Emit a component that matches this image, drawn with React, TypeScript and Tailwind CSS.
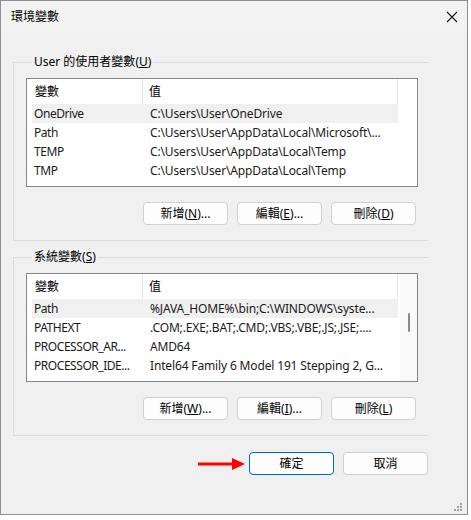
import React from "react";

const font = "font-['Noto_Sans','Noto_Sans_CJK_TC',sans-serif]";

type Row = { name: string, value: string, selected?: boolean };

const userRows: Row[] = [
    {name: "OneDrive", value: "C:\\Users\\User\\OneDrive", selected: true},
    {name: "Path", value: "C:\\Users\\User\\AppData\\Local\\Microsoft\\..."},
    {name: "TEMP", value: "C:\\Users\\User\\AppData\\Local\\Temp"},
    {name: "TMP", value: "C:\\Users\\User\\AppData\\Local\\Temp"},
];

const systemRows: Row[] = [
    {name: "Path", value: "%JAVA_HOME%\\bin;C:\\WINDOWS\\syste...", selected: true},
    {name: "PATHEXT", value: ".COM;.EXE;.BAT;.CMD;.VBS;.VBE;.JS;.JSE;...."},
    {name: "PROCESSOR_AR...", value: "AMD64"},
    {name: "PROCESSOR_IDE...", value: "Intel64 Family 6 Model 191 Stepping 2, G..."},
];

const Btn = (props: { label: string, keyChar?: string, tail?: string, primary?: boolean }) => {
    return (
        <button
            className={`w-[85px] h-[23px] rounded-[4px] bg-[#fdfdfd] text-[12px] leading-none text-black flex items-center justify-center border ${props.primary ? "border-[#0067c0]" : "border-[#d0d0d0]"}`}>
            {props.label}
            {props.keyChar && <>(<u>{props.keyChar}</u>){props.tail}</>}
        </button>
    );
};

const VarList = (props: { rows: Row[], scroll?: boolean }) => {
    return (
        <div className="w-[392px] h-[109px] border border-[#828790] bg-white flex">
            <div className="w-[371px] pl-[5px] flex flex-col">
                <div className="h-[25px] flex items-center text-[12px] text-black">
                    <div className="w-[111px] pl-[3px] border-r border-[#e5e5e5] h-full flex items-center">變數</div>
                    <div className="flex-1 pl-[6px] border-r border-[#e5e5e5] h-full flex items-center">值</div>
                </div>
                {props.rows.map((r) => (
                    <div key={r.name}
                         className={`h-[19px] flex items-center text-[12px] tracking-[-0.15px] text-[#1a1a1a] whitespace-nowrap ${r.selected ? "bg-[#f0f0f0]" : ""}`}>
                        <div className="w-[112px] shrink-0 pl-[2px] tracking-[-0.45px]">{r.name}</div>
                        <div className="flex-1 min-w-0 pl-[6px] overflow-hidden">{r.value}</div>
                    </div>
                ))}
            </div>
            {props.scroll &&
                <div className="ml-[2px] w-[17px] h-full bg-[#f9f9f9] flex justify-center">
                    <div className="mt-[39px] w-[2px] h-[19px] bg-[#8a8a8a] rounded-full"/>
                </div>
            }
        </div>
    );
};

const Group = (props: { title: string, keyChar: string, rows: Row[], scroll?: boolean, btns: string[] }) => {
    return (
        <fieldset className="w-[415px] border-t border-l border-b border-[#dcdcdc] pl-[12px] pb-[15px]">
            <legend className="ml-[6px] px-[2px] text-[12px] leading-[16px] text-black">
                {props.title}(<u>{props.keyChar}</u>)
            </legend>
            <div className="mt-[8px]">
                <VarList rows={props.rows} scroll={props.scroll}/>
            </div>
            <div className="mt-[15px] w-[390px] flex justify-end gap-[9px]">
                <Btn label="新增" keyChar={props.btns[0]} tail="..."/>
                <Btn label="編輯" keyChar={props.btns[1]} tail="..."/>
                <Btn label="刪除" keyChar={props.btns[2]}/>
            </div>
        </fieldset>
    );
};

export default function App() {
    return (
        <div className={`${font} w-[471px] h-[520px] bg-white`}>
            <div className="relative w-[468px] h-[515px] border border-[#8f8f8f] bg-[#f0f0f0] flex flex-col">
                <div className="h-[31px] bg-[#f3f3f3] flex items-center justify-between pl-[10px] pr-[9px]">
                    <span className="text-[12px] text-black">環境變數</span>
                    <svg width="12" height="12" viewBox="0 0 12 12">
                        <path d="M1 1 L11 11 M11 1 L1 11" stroke="#1a1a1a" strokeWidth="1.1"/>
                    </svg>
                </div>
                <div className="pl-[12px] pt-[22px] flex flex-col">
                    <Group title="User 的使用者變數" keyChar="U" rows={userRows} btns={["N", "E", "D"]}/>
                    <div className="mt-[8px]">
                        <Group title="系統變數" keyChar="S" rows={systemRows} scroll btns={["W", "I", "L"]}/>
                    </div>
                    <div className="mt-[16px] w-[415px] flex justify-end items-center gap-[9px]">
                        <svg width="48" height="14" viewBox="0 0 48 14" className="mr-[-6px]">
                            <path d="M0 7 H36" stroke="#ff0000" strokeWidth="3"/>
                            <path d="M34 1 L47 7 L34 13 Z" fill="#ff0000"/>
                        </svg>
                        <Btn label="確定" primary/>
                        <Btn label="取消"/>
                    </div>
                </div>
                <svg width="9" height="9" viewBox="0 0 9 9" className="absolute right-[4px] bottom-[2px]">
                    <rect x="6" y="0" width="2" height="2" fill="#a0a0a0"/>
                    <rect x="3" y="3" width="2" height="2" fill="#a0a0a0"/>
                    <rect x="6" y="3" width="2" height="2" fill="#a0a0a0"/>
                    <rect x="0" y="6" width="2" height="2" fill="#a0a0a0"/>
                    <rect x="3" y="6" width="2" height="2" fill="#a0a0a0"/>
                    <rect x="6" y="6" width="2" height="2" fill="#a0a0a0"/>
                </svg>
            </div>
        </div>
    );
}
